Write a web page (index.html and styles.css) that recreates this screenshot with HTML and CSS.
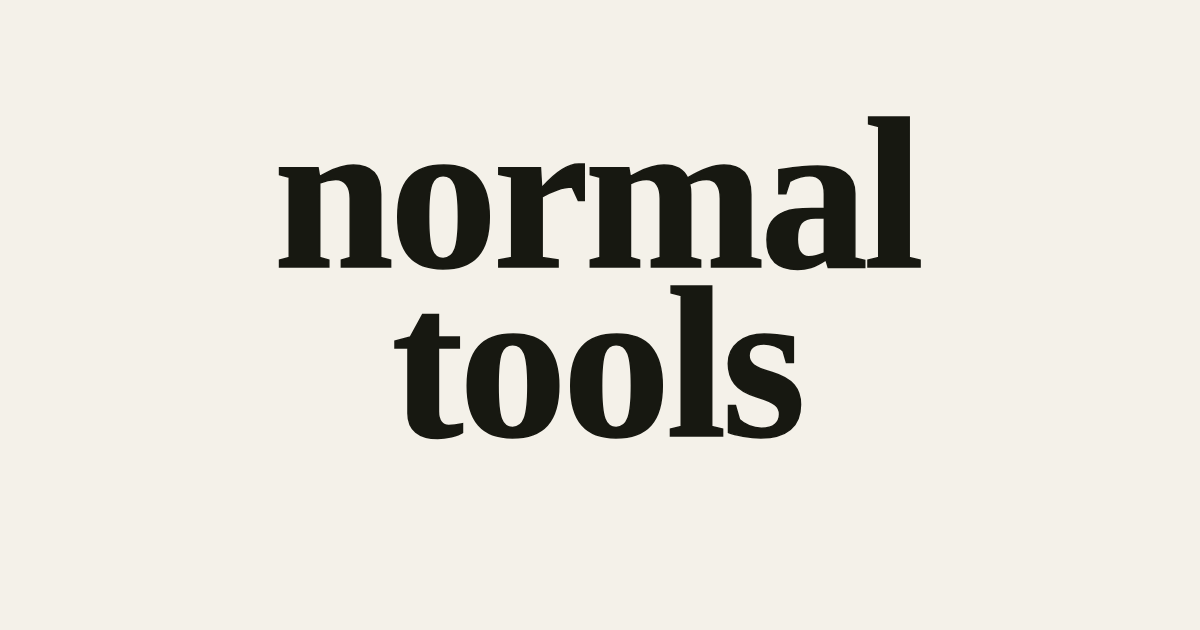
FILE: index.html
```html
<!DOCTYPE html>
<html lang="en">
<head>
  <meta charset="UTF-8">
  <title>normal tools</title>
  <link rel="stylesheet" href="styles.css">
</head>
<body>
  <h1 class="wordmark">normal<br>tools</h1>
</body>
</html>
```

FILE: styles.css
```css
html, body {
  height: 100%;
}
body {
  margin: 0;
  background-color: #f4f1e9;
  color: #171811;
  display: flex;
  justify-content: center;
  align-items: center;
}
.wordmark {
  margin: 0 7px 72px 0;
  font-family: "Liberation Serif", serif;
  font-weight: 700;
  font-size: 216px;
  line-height: 169px;
  letter-spacing: -4.4px;
  text-align: center;
  -webkit-text-stroke: 1.5px #171811;
}
```
